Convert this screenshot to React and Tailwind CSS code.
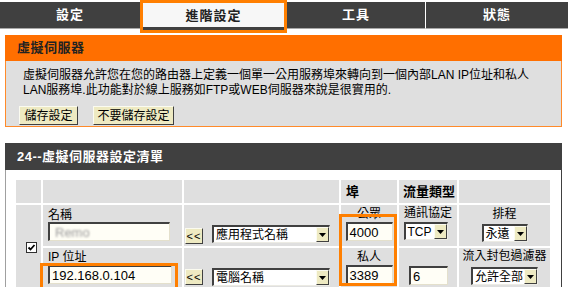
import React from 'react';

// ─── Small widgets ───────────────────────────────────────────────────────────

function Btn({ children, w }) {
  return (
    <button
      type="button"
      className={[
        'flex h-[19px] items-center justify-center bg-[#eeeac2] text-[12px] leading-none text-black',
        'border border-t-[#fbfbf0] border-l-[#fbfbf0] border-b-[#404040] border-r-[#404040]',
        w,
      ].join(' ')}
    >
      {children}
    </button>
  );
}

function Field({ w, children, className = '' }) {
  return (
    <div
      className={[
        'flex h-[19px] items-center overflow-hidden bg-[#fffef6] pl-[2px] text-[13px] leading-none text-black',
        'border-t-2 border-l-2 border-b border-r border-t-[#404040] border-l-[#404040] border-b-[#e4e0cc] border-r-[#e4e0cc]',
        w,
        className,
      ].join(' ')}
    >
      {children}
    </div>
  );
}

function Arrow() {
  return (
    <span className="flex w-[13px] shrink-0 items-center justify-center border border-t-[#fbfbf0] border-l-[#fbfbf0] border-b-[#404040] border-r-[#404040] bg-[#eeeac2]">
      <svg width="7" height="4" viewBox="0 0 7 4">
        <path d="M0 0h7L3.5 4z" fill="#000" />
      </svg>
    </span>
  );
}

function Select({ w, children }) {
  return (
    <div
      className={[
        'flex h-[18px] items-stretch bg-white text-[12px] leading-none text-black',
        'border-t-2 border-l-2 border-b border-r border-t-[#404040] border-l-[#404040] border-b-[#ecebe4] border-r-[#ecebe4]',
        w,
      ].join(' ')}
    >
      <span className="flex flex-1 items-center overflow-hidden whitespace-nowrap pl-[2px]">{children}</span>
      <Arrow />
    </div>
  );
}

function Back() {
  return (
    <span className="flex h-[16px] w-[18px] items-center justify-center border border-t-[#fbfbf0] border-l-[#fbfbf0] border-b-[#404040] border-r-[#404040] bg-[#eeeac2] text-[11px] leading-none tracking-[1px] text-black">
      &lt;&lt;
    </span>
  );
}

// ─── Page ────────────────────────────────────────────────────────────────────

export default function App() {
  return (
    <div className="h-[287px] w-[568px] overflow-hidden bg-white font-['Liberation_Sans','Noto_Sans_CJK_TC',sans-serif] text-[12px] text-black">
      {/* Top tabs */}
      <div className="flex h-[33px] items-start">
        <div className="mt-[2px] flex h-[27px] w-[140px] items-center justify-center border-b border-[#a8a8a8] bg-[#404040] text-[13px] font-bold tracking-[1px] text-white">
          設定
        </div>
        <div className="flex h-[33px] w-[147px] border-[3px] border-[#ff7f00] bg-[#f7f7f7] text-[13px] font-bold tracking-[1px] text-[#222]">
          <div className="flex h-full w-full items-center justify-center border-b-[3px] border-[#404040] pt-[1px]">進階設定</div>
        </div>
        <div className="mt-[2px] flex h-[27px] w-[138px] items-center justify-center border-b border-[#a8a8a8] bg-[#404040] text-[13px] font-bold tracking-[1px] text-white">
          工具
        </div>
        <div className="mt-[2px] flex h-[27px] flex-1 items-center justify-center border-b border-l border-[#a8a8a8] border-l-white bg-[#404040] text-[13px] font-bold tracking-[1px] text-white">
          狀態
        </div>
      </div>

      {/* Virtual server intro */}
      <div className="ml-[5px] mt-[2px] w-[557px]">
        <div className="flex h-[26px] items-center bg-[#ff6f00] pl-[12px] text-[13px] font-bold tracking-[0.5px] text-[#222]">
          虛擬伺服器
        </div>
        <div className="h-[66px] border-x border-b border-[#ff8a2a] bg-[#dfdfdf] pl-[17px] pt-[7px]">
          <p className="leading-[15px]">
            虛擬伺服器允許您在您的路由器上定義一個單一公用服務埠來轉向到一個內部LAN IP位址和私人
            <br />
            LAN服務埠.此功能對於線上服務如FTP或WEB伺服器來說是很實用的.
          </p>
          <div className="-ml-[4px] mt-[8px] flex gap-[15px]">
            <Btn w="w-[59px]">儲存設定</Btn>
            <Btn w="w-[81px]">不要儲存設定</Btn>
          </div>
        </div>
      </div>

      {/* Rule list */}
      <div className="ml-[5px] mt-[16px] w-[557px]">
        <div className="flex h-[27px] items-center bg-[#404040] pl-[12px] text-[13px] font-bold tracking-[0.5px] text-white">
          24--虛擬伺服器設定清單
        </div>
        <div className="h-[200px] border-x border-l-[#a0a0a0] border-r-[#404040] bg-white pl-[10px] pt-[10px]">
          <div className="relative grid w-[534px] grid-cols-[25px_139px_155px_56px_58px_91px] grid-rows-[23px_41px_41px] gap-[2px]">
            {/* header row */}
            <div className="bg-[#dfdfdf]" />
            <div className="bg-[#dfdfdf]" />
            <div className="bg-[#dfdfdf]" />
            <div className="flex items-center bg-[#dfdfdf] pl-[5px] text-[13px] font-bold">埠</div>
            <div className="flex items-center bg-[#dfdfdf] pl-[4px] text-[13px] font-bold">流量類型</div>
            <div className="bg-[#dfdfdf]" />

            {/* checkbox spanning both rows */}
            <div className="row-span-2 flex items-center bg-[#dfdfdf] pl-[10px] pt-[1px]">
              <span className="flex h-[11px] w-[11px] items-center justify-center border border-[#303030] bg-white">
                <svg width="9" height="9" viewBox="0 0 9 9">
                  <path d="M1.5 4.5l2 2 4-4.5" fill="none" stroke="#000" strokeWidth="1.8" />
                </svg>
              </span>
            </div>

            {/* row 2 */}
            <div className="bg-[#dfdfdf] pl-[5px] pt-[4px]">
              <div className="leading-[13px]">名稱</div>
              <Field w="w-[122px]">
                <span className="pl-[3px] text-[#9a9a9a] blur-[1px]">Remo</span>
              </Field>
            </div>
            <div className="flex items-start bg-[#dfdfdf] pl-[1px] pt-[20px]">
              <span className="mt-[3px]">
                <Back />
              </span>
              <span className="ml-[9px]">
                <Select w="w-[118px]">應用程式名稱</Select>
              </span>
            </div>
            <div className="flex flex-col items-center bg-[#dfdfdf] pt-[3px]">
              <div className="leading-[13px]">公眾</div>
              <Field w="w-[47px]" className="mt-[1px]">4000</Field>
            </div>
            <div className="flex flex-col items-center bg-[#dfdfdf] pt-[2px]">
              <div className="leading-[13px]">通訊協定</div>
              <div className="-ml-[5px] mt-[2px]">
                <Select w="w-[44px]">TCP</Select>
              </div>
            </div>
            <div className="flex flex-col items-center bg-[#dfdfdf] pt-[3px]">
              <div className="leading-[13px]">排程</div>
              <div className="mt-[3px]">
                <Select w="w-[46px]">永遠</Select>
              </div>
            </div>

            {/* row 3 */}
            <div className="bg-[#dfdfdf] pl-[5px] pt-[3px]">
              <div className="leading-[13px]">IP 位址</div>
              <Field w="w-[124px]" className="mt-[1px]">
                192.168.0.104
              </Field>
            </div>
            <div className="flex items-start bg-[#dfdfdf] pl-[1px] pt-[20px]">
              <span className="mt-[1px]">
                <Back />
              </span>
              <span className="ml-[9px]">
                <Select w="w-[118px]">電腦名稱</Select>
              </span>
            </div>
            <div className="flex flex-col items-center bg-[#dfdfdf] pt-[3px]">
              <div className="leading-[13px]">私人</div>
              <Field w="w-[47px]" className="mt-[1px]">3389</Field>
            </div>
            <div className="flex flex-col items-center bg-[#dfdfdf] pt-[18px]">
              <Field w="w-[39px]" className="ml-[1px]">6</Field>
            </div>
            <div className="flex flex-col items-center bg-[#dfdfdf] pt-[2px]">
              <div className="leading-[13px]">流入封包過濾器</div>
              <div className="mt-[4px]">
                <Select w="w-[67px]">允許全部</Select>
              </div>
            </div>

            {/* highlight boxes */}
            <div className="pointer-events-none absolute left-[323px] top-[34px] h-[72px] w-[58px] border-[3px] border-[#ff7f00]" />
            <div className="pointer-events-none absolute left-[24px] top-[83px] h-[30px] w-[138px] border-[3px] border-[#ff7f00]" />
          </div>
        </div>
      </div>
    </div>
  );
}
